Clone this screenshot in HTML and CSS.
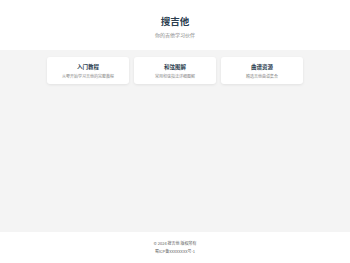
FILE: index.html
```html
<!DOCTYPE html>
<html lang="zh-CN">

<head>
    <meta charset="UTF-8">
    <meta name="viewport" content="width=device-width, initial-scale=1.0">
    <title>搜吉他</title>
    <link rel="stylesheet" href="styles.css">
</head>

<body>
    <header class="site-header">
        <h1 class="site-title">搜吉他</h1>
        <p class="site-tagline">你的吉他学习伙伴</p>
    </header>

    <main class="site-main">
        <div class="card-grid">
            <div class="card">
                <h2 class="card-title">入门教程</h2>
                <p class="card-desc">从零开始学习吉他的完整教程</p>
            </div>
            <div class="card">
                <h2 class="card-title">和弦图解</h2>
                <p class="card-desc">常用和弦指法详细图解</p>
            </div>
            <div class="card">
                <h2 class="card-title">曲谱资源</h2>
                <p class="card-desc">精选吉他曲谱集合</p>
            </div>
        </div>
    </main>

    <footer class="site-footer">
        <p>© 2024 搜吉他 版权所有</p>
        <p>蜀ICP备XXXXXXXX号-1</p>
    </footer>
</body>

</html>
```

FILE: styles.css
```css
body {
    margin: 0;
    min-height: 100vh;
    display: flex;
    flex-direction: column;
    background: #f4f4f4;
    font-family: "Noto Sans CJK SC", "Noto Sans", sans-serif;
    color: #2c3e50;
}

.site-header {
    background: #fff;
    text-align: center;
    padding: 14px 0 12px;
}

.site-title {
    margin: 0;
    font-size: 9.5px;
    line-height: 14px;
    font-weight: 700;
    color: #2c3e50;
}

.site-tagline {
    margin: 3px 0 0;
    font-size: 5px;
    line-height: 7px;
    color: #888;
}

.site-main {
    flex: 1;
    padding: 7px 0;
}

.card-grid {
    display: grid;
    grid-template-columns: repeat(3, 1fr);
    gap: 5px;
    max-width: 256px;
    margin: 0 auto;
}

.card {
    background: #fff;
    border-radius: 3px;
    box-shadow: 0 1px 3px rgba(0, 0, 0, 0.08);
    padding: 6px 4px;
    text-align: center;
}

.card-title {
    margin: 0;
    font-size: 5.5px;
    line-height: 8px;
    font-weight: 700;
    color: #2c3e50;
}

.card-desc {
    margin: 3px 0 0;
    font-size: 4px;
    line-height: 4px;
    color: #888;
}

.site-footer {
    background: #fff;
    text-align: center;
    padding: 9px 0 9px;
    font-size: 4px;
    line-height: 5px;
    color: #666;
}

.site-footer p {
    margin: 0;
}

.site-footer p + p {
    margin-top: 3px;
}
```
